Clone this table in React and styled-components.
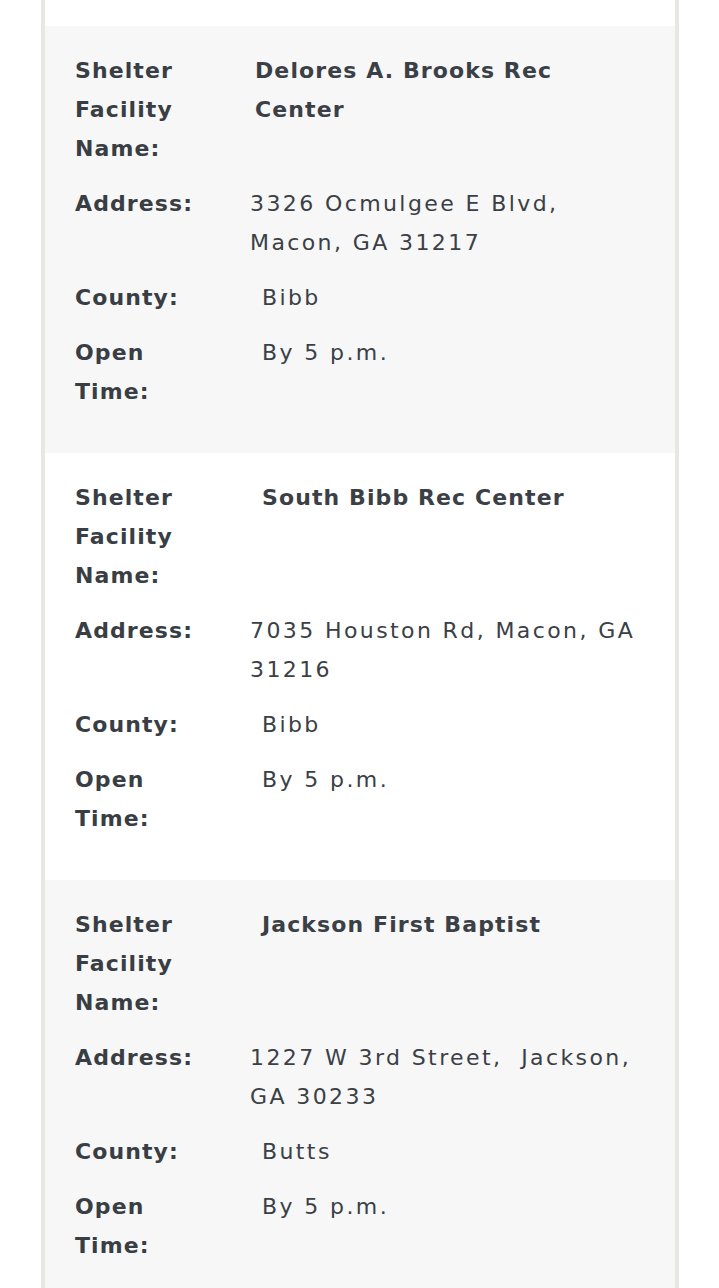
import styled, { createGlobalStyle } from "styled-components";

const shelters = [
  {
    name: "Delores A. Brooks Rec Center",
    nameIndent: 5,
    address: "3326 Ocmulgee E Blvd, Macon, GA 31217",
    county: "Bibb",
    open: "By 5 p.m.",
  },
  {
    name: "South Bibb Rec Center",
    nameIndent: 12,
    address: "7035 Houston Rd, Macon, GA 31216",
    county: "Bibb",
    open: "By 5 p.m.",
  },
  {
    name: "Jackson First Baptist",
    nameIndent: 12,
    address: "1227 W 3rd Street,  Jackson, GA 30233",
    county: "Butts",
    open: "By 5 p.m.",
  },
];

export default function App() {
  return (
    <>
      <GlobalStyle />
      <Card>
        <Tail />
        {shelters.map((s, i) => (
          <Record key={s.name} $shaded={i % 2 === 0}>
            <Row>
              <Label>Shelter Facility Name:</Label>
              <Value $bold $indent={s.nameIndent}>{s.name}</Value>
            </Row>
            <Row>
              <Label>Address:</Label>
              <Value>{s.address}</Value>
            </Row>
            <Row>
              <Label>County:</Label>
              <Value $indent={12}>{s.county}</Value>
            </Row>
            <Row>
              <Label>Open Time:</Label>
              <Value $indent={12}>{s.open}</Value>
            </Row>
          </Record>
        ))}
      </Card>
    </>
  );
}

// =========================== STYLES ============================= //

const GlobalStyle = createGlobalStyle`
  html, body {
    margin: 0;
    padding: 0;
    background: #ffffff;
  }
  body {
    font-family: "DejaVu Sans", "Liberation Sans", sans-serif;
    color: #343a40;
  }
`;

const Card = styled.div`
  margin: 0 40px 0 41px;
  border-left: 4px solid #e7e7e4;
  border-right: 4px solid #e7e7e4;
  min-height: 1288px;
  background: #fff;
`;

const Tail = styled.div`
  height: 26px;
  background: #fff;
`;

const Record = styled.div`
  background: ${(p) => (p.$shaded ? "#f7f7f7" : "#ffffff")};
  padding: 16.5px 30px 34.5px 30px;
`;

const Row = styled.div`
  display: grid;
  grid-template-columns: 175px 1fr;
  padding: 8px 0;
  font-size: 22px;
  line-height: 39px;
`;

const Label = styled.div`
  font-weight: 700;
  width: 120px;
  letter-spacing: 1.1px;
  color: #383e44;
`;

const Value = styled.div`
  font-weight: ${(p) => (p.$bold ? 700 : 400)};
  letter-spacing: ${(p) => (p.$bold ? "1.1px" : "2.4px")};
  padding-left: ${(p) => p.$indent || 0}px;
  white-space: pre-wrap;
  color: #3a4046;
`;
